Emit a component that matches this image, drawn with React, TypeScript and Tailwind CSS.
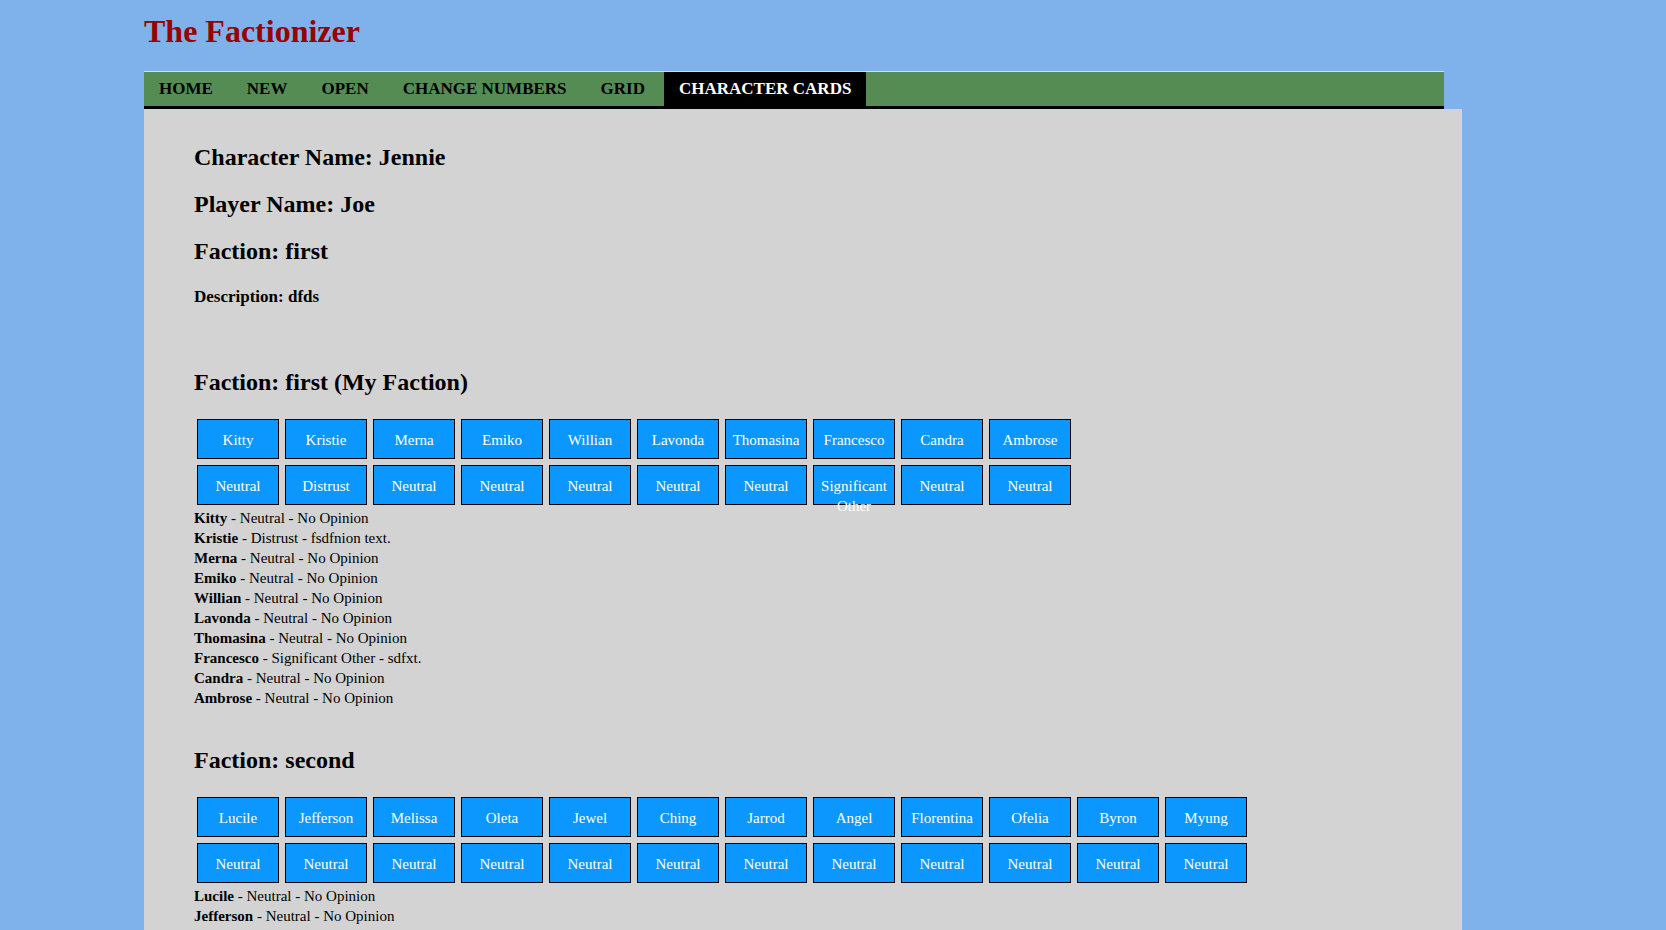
type Opinion = { name: string; stance: string; note: string };

type Faction = { title: string; members: Opinion[] };

const navItems = ["HOME", "NEW", "OPEN", "CHANGE NUMBERS", "GRID", "CHARACTER CARDS"];

const noOpinion = (name: string): Opinion => ({ name, stance: "Neutral", note: "No Opinion" });

const factions: Faction[] = [
  {
    title: "Faction: first (My Faction)",
    members: [
      noOpinion("Kitty"),
      { name: "Kristie", stance: "Distrust", note: "fsdfnion text." },
      noOpinion("Merna"),
      noOpinion("Emiko"),
      noOpinion("Willian"),
      noOpinion("Lavonda"),
      noOpinion("Thomasina"),
      { name: "Francesco", stance: "Significant Other", note: "sdfxt." },
      noOpinion("Candra"),
      noOpinion("Ambrose"),
    ],
  },
  {
    title: "Faction: second",
    members: [
      "Lucile", "Jefferson", "Melissa", "Oleta", "Jewel", "Ching",
      "Jarrod", "Angel", "Florentina", "Ofelia", "Byron", "Myung",
    ].map(noOpinion),
  },
];

function Cell({ label }: { label: string }) {
  // fixed height, text starts from the top: long labels spill out below the box
  return (
    <div className="w-[82px] h-[40px] shrink-0 border border-black bg-[#0b97fe] text-white text-center text-[15px] leading-[20px] pt-[10px]">
      {label}
    </div>
  );
}

function FactionBlock({ faction, first }: { faction: Faction; first: boolean }) {
  return (
    <section className={first ? "mt-[63px]" : "mt-[39px]"}>
      <h2 className="text-[24px] leading-[27px] font-bold">{faction.title}</h2>
      <div className="mt-[23px] ml-[3px] flex flex-col gap-[6px]">
        <div className="flex gap-[6px]">
          {faction.members.map((m) => (
            <Cell key={m.name} label={m.name} />
          ))}
        </div>
        <div className="flex gap-[6px]">
          {faction.members.map((m) => (
            <Cell key={m.name} label={m.stance} />
          ))}
        </div>
      </div>
      <ul className="mt-[3px] text-[15px] leading-[20px]">
        {faction.members.map((m) => (
          <li key={m.name}>
            <b>{m.name}</b> - {m.stance} - {m.note}
          </li>
        ))}
      </ul>
    </section>
  );
}

export default function App() {
  return (
    <div className="min-h-screen bg-[#7fb2eb] font-['Liberation_Serif','Times_New_Roman',serif] text-black">
      <div className="ml-[144px] w-[1318px] flex flex-col">
        <h1 className="pt-[13px] text-[32px] leading-[36px] font-bold text-[#990000]">The Factionizer</h1>

        {/* nav is narrower than the panel below it, as in the original page */}
        <nav className="mt-[22px] w-[1300px] flex gap-[4px] bg-[#548c54] border-t border-[#dcdcdc] border-b-[3px] border-b-black h-[38px]">
          {navItems.map((item) => (
            <a
              key={item}
              className={`px-[15px] flex items-center text-[17px] font-bold ${
                item === "CHARACTER CARDS" ? "bg-black text-white" : "text-black"
              }`}
            >
              {item}
            </a>
          ))}
        </nav>

        <main className="bg-[#d3d3d3] pl-[50px] pt-[35px] pb-[40px] min-h-[821px]">
          <h2 className="text-[24px] leading-[27px] font-bold">Character Name: Jennie</h2>
          <h2 className="mt-[20px] text-[24px] leading-[27px] font-bold">Player Name: Joe</h2>
          <h2 className="mt-[20px] text-[24px] leading-[27px] font-bold">Faction: first</h2>
          <h4 className="mt-[22px] text-[17px] leading-[19px] font-bold">Description: dfds</h4>

          {factions.map((f, i) => (
            <FactionBlock key={f.title} faction={f} first={i === 0} />
          ))}
        </main>
      </div>
    </div>
  );
}
